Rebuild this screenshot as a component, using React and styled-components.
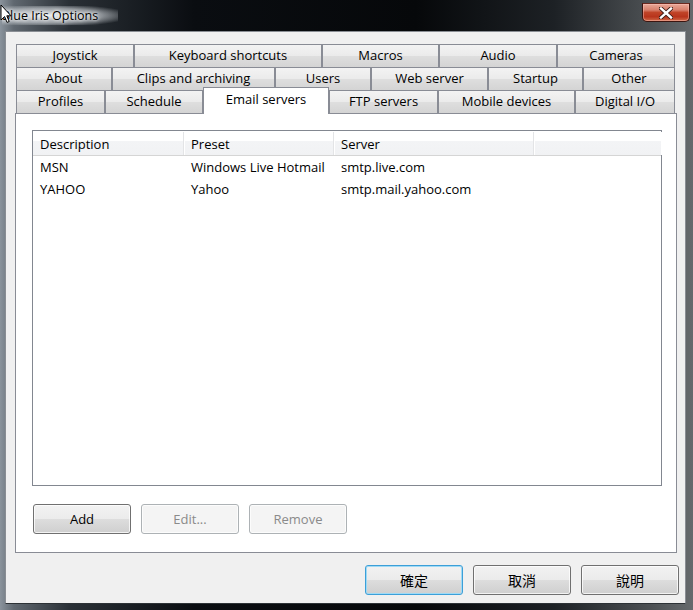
import React from "react";
import styled, { createGlobalStyle } from "styled-components";

const GlobalStyle = createGlobalStyle`
  html, body { margin: 0; padding: 0; background: #000; }
  body { font-family: "Open Sans", "Noto Sans CJK TC", sans-serif; }
`;

const Window = styled.div`
  width: 693px;
  height: 610px;
  box-sizing: border-box;
  display: flex;
  flex-direction: column;
  padding: 0 7px 6px 5px;
  position: relative;
  overflow: hidden;
  background: linear-gradient(90deg, #8a939c 0%, #606870 2%, #2a3036 10%, #0a0d11 28%, #06080a 60%, #1d2125 80%, #4d5154 94%, #666a6d 100%);
`;

const TitleBar = styled.div`
  height: 31px;
  display: flex;
  justify-content: space-between;
  align-items: flex-start;
  margin: 0 -4px 0 -3px;
`;

const Title = styled.div`
  margin-top: 6px;
  padding: 1px 20px 1px 0;
  font-size: 12.5px;
  color: #000;
  background: radial-gradient(ellipse at 40% 50%, rgba(240,242,244,0.95) 0%, rgba(205,210,215,0.6) 55%, rgba(120,125,130,0) 85%);
  text-shadow: 0 0 6px #fff, 0 0 3px #fff;
`;

const Cursor = styled.svg`
  position: absolute;
  left: 0;
  top: 4px;
`;

const CloseButton = styled.div`
  margin-top: 3px;
  width: 48px;
  height: 19px;
  box-sizing: border-box;
  border: 1px solid #3b1510;
  border-top-color: #6b2a20;
  border-radius: 0 0 5px 5px;
  background: linear-gradient(#e8a898 0%, #d8806c 35%, #c04428 50%, #b8341c 75%, #d06a48 100%);
  box-shadow: inset 0 0 0 1px rgba(255, 200, 190, 0.45);
  display: flex;
  align-items: center;
  justify-content: center;
`;

const Client = styled.div`
  flex: 1;
  display: flex;
  flex-direction: column;
  background: #f0f0f0;
  border: 1px solid #8a8e94;
  border-bottom-color: #2d3236;
  padding: 12px 8px 8px 9px;
`;

const Tabs = styled.div`
  margin-left: 1px;
  width: 659px;
  display: flex;
  flex-direction: column;
`;

const TabRow = styled.div`
  display: grid;
  grid-template-columns: ${(p) => p.$cols};
  height: 23px;
  align-items: start;
`;

const Tab = styled.div`
  box-sizing: border-box;
  height: ${(p) => (p.$active ? "27px" : "23px")};
  margin-top: ${(p) => (p.$active ? "-3px" : "0")};
  padding-bottom: ${(p) => (p.$active ? "4px" : "3px")};
  position: relative;
  z-index: ${(p) => (p.$active ? 1 : 0)};
  border: 1px solid #898c95;
  border-bottom: none;
  background: ${(p) =>
    p.$active ? "#ffffff" : "linear-gradient(#f3f3f3 0%, #ebebeb 48%, #dedede 52%, #d4d4d4 100%)"};
  display: flex;
  align-items: center;
  justify-content: center;
  font-size: 13px;
  color: #000;
  white-space: nowrap;
`;

const Panel = styled.div`
  width: 662px;
  box-sizing: border-box;
  background: #fff;
  border: 1px solid #898c95;
  padding: 16px 14px 18px 16px;
  display: flex;
  flex-direction: column;
  gap: 18px;
`;

const ListView = styled.div`
  height: 356px;
  box-sizing: border-box;
  border: 1px solid #828790;
  background: #fff;
`;

const ColGrid = styled.div`
  display: grid;
  grid-template-columns: 151px 150px 200px 1fr;
  font-size: 13px;
  color: #000;
`;

const HeaderRow = styled(ColGrid)`
  height: 25px;
  box-sizing: border-box;
  padding-top: 1px;
  border-bottom: 1px solid #d5d5d5;
  background: linear-gradient(#ffffff 0%, #ffffff 40%, #f3f4f6 40%, #f1f2f4 100%);
`;

const HeaderCell = styled.div`
  display: flex;
  align-items: center;
  padding-left: 7px;
  border-right: 1px solid #e3e4e6;
  box-shadow: 1px 0 0 #fff;
  &:last-child { border-right: none; }
`;

const Row = styled(ColGrid)`
  height: 22px;
  align-items: center;
`;

const Cell = styled.div`
  padding-left: 7px;
  white-space: nowrap;
`;

const ButtonRow = styled.div`
  display: flex;
  gap: 10px;
  padding-left: 1px;
`;

const Footer = styled.div`
  margin-top: auto;
  margin-right: -2px;
  display: flex;
  justify-content: flex-end;
  gap: 10px;
`;

const Button = styled.button`
  width: 98px;
  height: 30px;
  box-sizing: border-box;
  margin: 0;
  padding: 0;
  font-family: ${(p) => (p.$cjk ? '"Noto Sans CJK TC", sans-serif' : '"Open Sans", sans-serif')};
  font-size: ${(p) => (p.$cjk ? "14px" : "13px")};
  color: ${(p) => (p.disabled ? "#8a8a8a" : "#000")};
  border: 1px solid ${(p) => (p.$default ? "#3c9fd8" : p.disabled ? "#adb2b5" : "#707070")};
  border-radius: 3px;
  background: ${(p) =>
    p.disabled
      ? "#f4f4f4"
      : "linear-gradient(#f2f2f2 0%, #ebebeb 50%, #dddddd 50%, #cfcfcf 100%)"};
  box-shadow: inset 0 0 0 1px ${(p) => (p.$default ? "#9fdaf5" : "rgba(255,255,255,0.75)")};
`;

const tabRows = [
  { cols: "118px 188px 117px 118px 118px", tabs: ["Joystick", "Keyboard shortcuts", "Macros", "Audio", "Cameras"] },
  { cols: "96px 163px 96px 117px 95px 92px", tabs: ["About", "Clips and archiving", "Users", "Web server", "Startup", "Other"] },
  { cols: "89px 98px 126px 109px 137px 100px", tabs: ["Profiles", "Schedule", "Email servers", "FTP servers", "Mobile devices", "Digital I/O"] },
];

const servers = [
  { desc: "MSN", preset: "Windows Live Hotmail", server: "smtp.live.com" },
  { desc: "YAHOO", preset: "Yahoo", server: "smtp.mail.yahoo.com" },
];

export default function App() {
  return (
    <>
      <GlobalStyle />
      <Window>
        <TitleBar>
          <Title>Blue Iris Options</Title>
          <CloseButton>
            <svg width="14" height="12" viewBox="0 0 14 12">
              <path d="M2 1.5 L12 10.5 M12 1.5 L2 10.5" stroke="#3a1a14" strokeWidth="4.2" strokeLinecap="square" />
              <path d="M2 1.5 L12 10.5 M12 1.5 L2 10.5" stroke="#fff" strokeWidth="2.4" strokeLinecap="square" />
            </svg>
          </CloseButton>
        </TitleBar>
        <Cursor width="12" height="20" viewBox="0 0 12 20">
          <path d="M1 1 L1 16 L4.6 12.6 L7 18.4 L9.2 17.5 L6.8 11.8 L11 11.8 Z" fill="#fff" stroke="#000" strokeWidth="1" />
        </Cursor>
        <Client>
          <Tabs>
            {tabRows.map((r, i) => (
              <TabRow key={i} $cols={r.cols}>
                {r.tabs.map((t) => (
                  <Tab key={t} $active={t === "Email servers"}>{t}</Tab>
                ))}
              </TabRow>
            ))}
          </Tabs>
          <Panel>
            <ListView>
              <HeaderRow>
                <HeaderCell>Description</HeaderCell>
                <HeaderCell>Preset</HeaderCell>
                <HeaderCell>Server</HeaderCell>
                <HeaderCell />
              </HeaderRow>
              {servers.map((s) => (
                <Row key={s.desc}>
                  <Cell>{s.desc}</Cell>
                  <Cell>{s.preset}</Cell>
                  <Cell>{s.server}</Cell>
                  <Cell />
                </Row>
              ))}
            </ListView>
            <ButtonRow>
              <Button>Add</Button>
              <Button disabled>Edit...</Button>
              <Button disabled>Remove</Button>
            </ButtonRow>
          </Panel>
          <Footer>
            <Button $cjk $default>確定</Button>
            <Button $cjk>取消</Button>
            <Button $cjk>說明</Button>
          </Footer>
        </Client>
      </Window>
    </>
  );
}
